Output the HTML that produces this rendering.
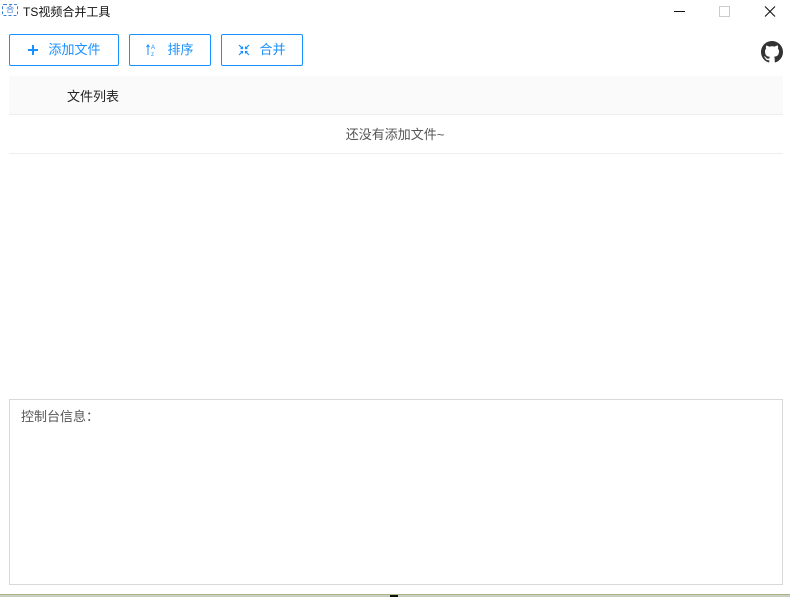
<!DOCTYPE html>
<html><head><meta charset="utf-8"><style>
*{margin:0;padding:0;box-sizing:border-box}
body{width:790px;height:597px;background:#fff;position:relative;overflow:hidden;font-family:"Liberation Sans","Noto Sans CJK SC",sans-serif;font-size:13px;color:#222}
.abs{position:absolute}
.btn{position:absolute;top:34px;height:32px;border:1px solid #1890ff;border-radius:2px;color:#1890ff;font-size:13px;display:flex;align-items:center;justify-content:center;gap:9px;line-height:30px}
</style></head><body>
<div class="abs" style="left:2px;top:4px;width:16px;height:12px;border:1px dashed #3a7bd5;border-radius:2px;font-size:8px;color:#3a7bd5;line-height:10px;text-align:center">合</div>
<div class="abs" style="left:23px;top:3px;font-size:12px;color:#111">TS视频合并工具</div>
<svg class="abs" style="left:670px;top:5px" width="110" height="14"><path d="M4 6.5h11" stroke="#111" stroke-width="1"/><rect x="49.5" y="1.5" width="10" height="10" fill="none" stroke="#ccc"/><path d="M95 1.5l10 10M105 1.5l-10 10" stroke="#111" stroke-width="1.1"/></svg>
<div class="btn" style="left:9px;width:110px"><svg width="12" height="12"><path d="M6 1v10M1 6h10" stroke="#1890ff" stroke-width="2"/></svg>添加文件</div>
<div class="btn" style="left:129px;width:82px"><svg width="12" height="12"><path d="M2 11V1M0.5 3L2 1l1.5 2" stroke="#1890ff" fill="none" stroke-width="1"/><text x="5" y="5" font-size="6" fill="#1890ff" font-family="Liberation Sans">A</text><text x="5" y="12" font-size="6" fill="#1890ff" font-family="Liberation Sans">z</text></svg>排序</div>
<div class="btn" style="left:221px;width:82px"><svg width="12" height="12"><path d="M1 1l3.5 3.5M11 1L7.5 4.5M1 11l3.5-3.5M11 11L7.5 7.5M2.5 4.5h2v-2M9.5 4.5h-2v-2M2.5 7.5h2v2M9.5 7.5h-2v2" stroke="#1890ff" fill="none" stroke-width="1.2"/></svg>合并</div>
<svg class="abs" style="left:761px;top:41px" width="22" height="22" viewBox="0 0 16 16"><path fill="#333" d="M8 0C3.58 0 0 3.58 0 8c0 3.54 2.29 6.53 5.47 7.59.4.07.55-.17.55-.38v-1.33c-2.230.48-2.7-1.070-2.7-1.070-.36-.92-.89-1.170-.89-1.170-.73-.5.06-.49.06-.49.8.06 1.23.83 1.23.83.71 1.22 1.87.87 2.33.66.07-.52.28-.87.51-1.070-1.78-.2-3.65-.89-3.65-3.95 0-.87.31-1.59.82-2.15-.08-.2-.36-1.02.08-2.12 0 0 .67-.21 2.2.82A7.6 7.6 0 0 1 8 3.86c.68 0 1.36.09 2 .27 1.53-1.04 2.2-.82 2.2-.82.44 1.1.16 1.92.08 2.12.51.56.82 1.27.82 2.15 0 3.070-1.87 3.75-3.65 3.95.29.25.54.73.54 1.48v2.2c0 .21.15.46.55.38A8 8 0 0 0 16 8c0-4.42-3.58-8-8-8z"/></svg>
<div class="abs" style="left:9px;top:76px;width:774px;height:39px;background:#fafafa;border-bottom:1px solid #eee"></div>
<div class="abs" style="left:67px;top:86px;font-size:13px;color:#222">文件列表</div>
<div class="abs" style="left:9px;top:115px;width:774px;height:39px;border-bottom:1px solid #eee;text-align:center;line-height:39px;color:#555;padding-right:2px">还没有添加文件~</div>
<div class="abs" style="left:9px;top:399px;width:774px;height:186px;border:1px solid #d9d9d9"></div>
<div class="abs" style="left:21px;top:406px;color:#555;font-family:'Noto Sans CJK SC',sans-serif">控制台信息：</div>
<div class="abs" style="left:0;top:594px;width:790px;height:3px;background:#c8cfc0;border-top:1px solid #a8b88a"></div>
<div class="abs" style="left:390px;top:595px;width:8px;height:2px;background:#111"></div>
</body></html>
